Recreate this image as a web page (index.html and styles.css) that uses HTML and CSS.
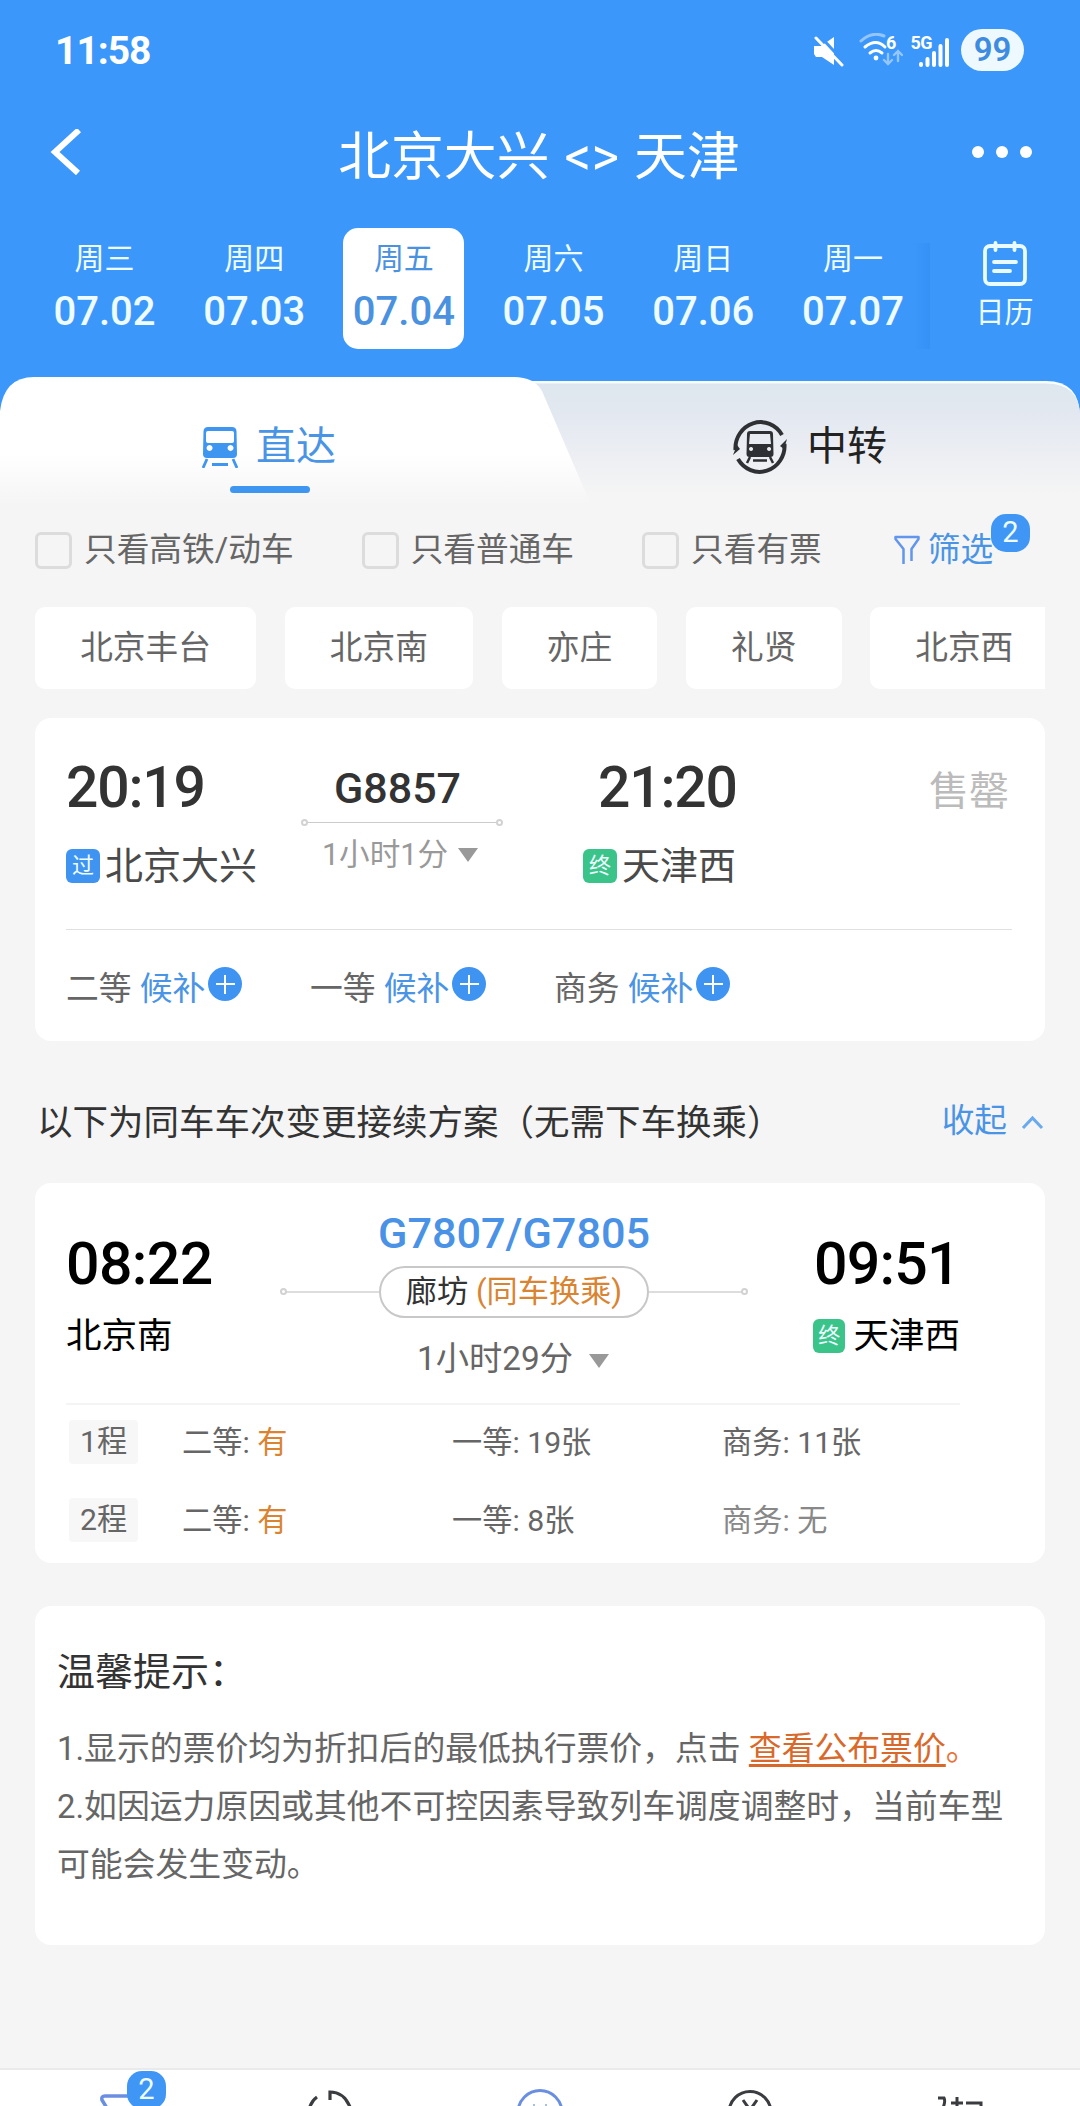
FILE: index.html
```html
<!DOCTYPE html>
<html lang="zh-CN">
<head>
    <meta charset="UTF-8">
    <meta name="viewport" content="width=device-width, initial-scale=1.0">
    <title>北京大兴 - 天津</title>
    <link rel="stylesheet" href="styles.css">
</head>
<body>
    <div class="header">
        <div class="status-bar">
            <span class="clock">11:58</span>
            <div class="status-icons">
                <svg class="icon-mute" width="30" height="31" viewBox="0 0 30 31">
                    <path d="M0 10h7L20 1v28L8 21H2l-2-3z" fill="#fff"/>
                    <path d="M4-2l28 30" stroke="#3c97fb" stroke-width="3"/>
                    <path d="M2 2l26 27" stroke="#fff" stroke-width="3" stroke-linecap="round"/>
                </svg>
                <svg class="icon-wifi" width="44" height="34" viewBox="0 0 44 34">
                    <g fill="none" stroke="#fff" stroke-width="3" stroke-linecap="round">
                        <path d="M2 8Q13-2 25 3" opacity=".45"/>
                        <path d="M6 14q11-9 20 0M11 20q6-5 12 0"/>
                        <path d="M29 21v10m-4-4l4 4 4-4M39 28V18m-4 4l4-4 4 4" opacity=".45" stroke-width="2.4"/>
                    </g>
                    <circle cx="17" cy="25" r="2.4" fill="#fff"/>
                </svg>
                <span class="wifi-gen">6</span>
                <span class="network">5G</span>
                <svg class="icon-signal" width="32" height="34" viewBox="0 0 32 34">
                    <path d="M3 31v-1M9.500 31v-6M16 31V19M22.500 31V12M29 31V6" stroke="#fff" stroke-width="4" stroke-linecap="round"/>
                </svg>
                <span class="battery">99</span>
            </div>
        </div>

        <div class="nav-bar">
            <svg class="back" width="32" height="46" viewBox="0 0 32 46">
                <path d="M29 1L5 23l23 21" fill="none" stroke="#fff" stroke-width="6"/>
            </svg>
            <h1>北京大兴 &lt;&gt; 天津</h1>
            <div class="more"><i></i><i></i><i></i></div>
        </div>

        <div class="date-bar">
            <div class="day"><span>周三</span><b>07.02</b></div>
            <div class="day"><span>周四</span><b>07.03</b></div>
            <div class="day active"><span>周五</span><b>07.04</b></div>
            <div class="day"><span>周六</span><b>07.05</b></div>
            <div class="day"><span>周日</span><b>07.06</b></div>
            <div class="day"><span>周一</span><b>07.07</b></div>
            <div class="calendar">
                <svg width="44" height="45" viewBox="0 0 44 45">
                    <g fill="none" stroke="#e9fbff" stroke-width="3.800" stroke-linecap="round">
                        <rect x="2" y="5" width="40" height="38" rx="5"/>
                        <path d="M12.500 2v7M31.500 2v7M11 21h22M11 30h16"/>
                    </g>
                </svg>
                <span>日历</span>
            </div>
        </div>
    </div>

    <div class="tabs">
        <svg class="tabs-bg" width="1080" height="128" viewBox="0 0 1080 128">
            <defs>
                <linearGradient id="rightTab" x1="0" y1="0" x2="0" y2="1">
                    <stop offset="0" stop-color="#dde6ee"/>
                    <stop offset=".35" stop-color="#e5e9f1"/>
                    <stop offset="1" stop-color="#f5f5f5"/>
                </linearGradient>
                <linearGradient id="leftTab" x1="0" y1="0" x2="0" y2="1">
                    <stop offset="0" stop-color="#fff"/>
                    <stop offset=".6" stop-color="#fff"/>
                    <stop offset="1" stop-color="#f5f5f5"/>
                </linearGradient>
            </defs>
            <path d="M0 0h1080v60H0z" fill="#3c97fb"/>
            <path d="M480 4h566q34 0 34 36v78H480z" fill="#f8fdff"/>
            <path d="M480 6.500h566q34 0 34 34v78H480z" fill="url(#rightTab)"/>
            <path d="M0 34Q4 0 34 0h480q20 0 28 14l49 114H0z" fill="url(#leftTab)"/>
        </svg>
        <div class="tab active">
            <svg class="icon-train" width="36" height="41" viewBox="0 0 36 41">
                <path fill="#3f96f0" fill-rule="evenodd" d="M6 0h24q4 0 4.500 4L35 27q0 4-4 4H5q-4 0-4-4L1.500 4Q2 0 6 0zM6 4q-2 0-2 2v8q0 2 2 2h24q2 0 2-2V6q0-2-2-2zM7.500 18a3 3 0 1 0 .1 0zM28.500 18a3 3 0 1 0 .1 0z"/>
                <path d="M5 32l-4 9M31 32l4 9M10 37.500h16" stroke="#3f96f0" stroke-width="2.800"/>
            </svg>
            <span>直达</span>
        </div>
        <div class="tab">
            <svg class="icon-transfer" width="56" height="58" viewBox="0 0 56 58">
                <g fill="none" stroke="#2e3033" stroke-width="4">
                    <path d="M3.500 32A25 26 0 0 1 50 17M52.500 26A25 26 0 0 1 6 41"/>
                </g>
                <path d="M1 37l7-6-3-4zM55 21l-7 7 4 3z" fill="#2e3033"/>
                <path fill="#2e3033" fill-rule="evenodd" d="M18 13h20q3 0 3 3l.5 20q0 3-3 3h-21q-3 0-3-3L15 16q0-3 3-3zM18 16l-1 10h22l-1-10zM19 29a2 2 0 1 0 .1 0zM37 29a2 2 0 1 0 .1 0z"/>
                <path d="M18 39l-3 6M38 39l3 6M21 42.500h14" stroke="#2e3033" stroke-width="2.500"/>
            </svg>
            <span>中转</span>
        </div>
    </div>

    <div class="filters">
        <label class="check"><i></i>只看高铁/动车</label>
        <label class="check"><i></i>只看普通车</label>
        <label class="check"><i></i>只看有票</label>
        <div class="filter-btn">
            <svg width="26" height="30" viewBox="0 0 26 30">
                <path d="M9.500 29V14L1.500 4V2h23v2l-7 10v12" fill="none" stroke="#6296ec" stroke-width="2.500" stroke-linejoin="round"/>
            </svg>
            <span>筛选</span>
            <em class="count">2</em>
        </div>
    </div>

    <div class="stations">
        <span>北京丰台</span>
        <span>北京南</span>
        <span>亦庄</span>
        <span>礼贤</span>
        <span>北京西</span>
    </div>

    <div class="card train">
        <div class="train-main">
            <div class="stop from">
                <div class="time">20:19</div>
                <div class="name"><i class="mark pass">过</i>北京大兴</div>
            </div>
            <div class="trip">
                <div class="code">G8857</div>
                <div class="rail"></div>
                <div class="duration">1小时1分<i class="arrow"></i></div>
            </div>
            <div class="stop to">
                <div class="time">21:20</div>
                <div class="name"><i class="mark end">终</i>天津西</div>
            </div>
            <div class="sold-out">售罄</div>
        </div>
        <div class="seats">
            <div class="seat">二等 <a>候补</a><i class="plus"></i></div>
            <div class="seat">一等 <a>候补</a><i class="plus"></i></div>
            <div class="seat">商务 <a>候补</a><i class="plus"></i></div>
        </div>
    </div>

    <div class="section-title">
        <h2>以下为同车车次变更接续方案（无需下车换乘）</h2>
        <div class="collapse">
            收起
            <svg width="23" height="15" viewBox="0 0 23 15">
                <path d="M2 13l9.500-10L21 13" fill="none" stroke="#69a9ee" stroke-width="3"/>
            </svg>
        </div>
    </div>

    <div class="card plan">
        <div class="plan-main">
            <div class="plan-stop">
                <div class="time">08:22</div>
                <div class="name">北京南</div>
            </div>
            <div class="plan-trip">
                <div class="code">G7807/G7805</div>
                <div class="transfer">
                    <span class="line left"></span>
                    <div class="pill">廊坊 <em>(同车换乘)</em></div>
                    <span class="line right"></span>
                </div>
                <div class="duration">1小时29分<i class="arrow"></i></div>
            </div>
            <div class="plan-stop to">
                <div class="time">09:51</div>
                <div class="name"><i class="mark end">终</i>天津西</div>
            </div>
        </div>
        <div class="leg">
            <span class="leg-no">1程</span>
            <span>二等: <em>有</em></span>
            <span>一等: 19张</span>
            <span>商务: 11张</span>
        </div>
        <div class="leg">
            <span class="leg-no">2程</span>
            <span>二等: <em>有</em></span>
            <span>一等: 8张</span>
            <span class="none">商务: 无</span>
        </div>
    </div>

    <div class="card tips">
        <h3>温馨提示：</h3>
        <p>1.显示的票价均为折扣后的最低执行票价，点击 <a>查看公布票价</a><em>。</em></p>
        <p>2.如因运力原因或其他不可控因素导致列车调度调整时，当前车型可能会发生变动。</p>
    </div>

    <div class="bottom-bar">
        <div class="bottom-item">
            <svg width="60" height="60" viewBox="0 0 60 60">
                <path d="M28 54V34L17 16q-1-4 3-4h32q4 0 2 4L43 34v14" fill="none" stroke="#6b8fe0" stroke-width="3.500" stroke-linejoin="round"/>
            </svg>
            <em class="count">2</em>
        </div>
        <div class="bottom-item">
            <svg width="60" height="60" viewBox="0 0 60 60">
                <path d="M11 26Q13 17 19 13M32 16V8Q46 8 52 23" fill="none" stroke="#3a3c40" stroke-width="3.200"/>
            </svg>
        </div>
        <div class="bottom-item">
            <svg width="60" height="60" viewBox="0 0 60 60">
                <circle cx="30" cy="28.500" r="22" fill="none" stroke="#6b8fe0" stroke-width="3"/>
                <path d="M24 20v4M36 20v4" stroke="#a9bdea" stroke-width="2"/>
            </svg>
        </div>
        <div class="bottom-item">
            <svg width="60" height="60" viewBox="0 0 60 60">
                <circle cx="28" cy="28.500" r="21" fill="none" stroke="#3a3c40" stroke-width="3"/>
                <path d="M21 16l7 10 7-10M28 26v14M20 28h16" fill="none" stroke="#3a3c40" stroke-width="3"/>
            </svg>
        </div>
        <div class="bottom-item">
            <svg width="60" height="60" viewBox="0 0 60 60">
                <path d="M3 14h6q2 4-2 12M22 13v20M16 19h12M31 19h15v14" fill="none" stroke="#3a3c40" stroke-width="3"/>
            </svg>
        </div>
    </div>
</body>
</html>
```
FILE: styles.css
```css
* {
    margin: 0;
    padding: 0;
    box-sizing: border-box;
}

body {
    width: 1080px;
    background: #f5f5f5;
    font-family: Roboto, "Noto Sans CJK SC", sans-serif;
    font-size: 32.7px;
    color: #666;
}

i, em {
    font-style: normal;
}

h1, h2, h3 {
    font-weight: 400;
}

svg {
    display: block;
    flex: none;
}

/* header */
.header {
    height: 377px;
    background: #3c97fb;
    color: #fff;
}

.status-bar {
    height: 100px;
    padding: 0 56px 0 55px;
    display: flex;
    align-items: center;
    justify-content: space-between;
}

.clock {
    font-size: 39px;
    font-weight: 700;
    letter-spacing: -1px;
    padding-top: 1px;
}

.status-icons {
    display: flex;
    align-items: center;
}

.icon-mute {
    margin-top: 3px;
}

.icon-wifi {
    margin-left: 15px;
}

.wifi-gen,
.network {
    font-size: 18px;
    font-weight: 700;
    line-height: 22px;
    margin-top: -15px;
}

.wifi-gen {
    margin-left: -17px;
}

.network {
    margin-left: 14px;
    letter-spacing: -0.500px;
}

.icon-signal {
    margin-left: -14px;
    margin-top: 2px;
}

.battery {
    width: 63px;
    height: 42px;
    margin-left: 11px;
    border-radius: 21px;
    background: #eef9ff;
    color: #3f8be0;
    font-size: 33px;
    font-weight: 600;
    line-height: 42px;
    text-align: center;
}

.nav-bar {
    height: 108px;
    padding: 0 48px 0 50px;
    display: flex;
    align-items: center;
    justify-content: space-between;
}

.back,
.more {
    margin-top: -5px;
}

.nav-bar h1 {
    font-size: 52.800px;
    line-height: 60px;
    padding: 5px 0 0 24px;
    word-spacing: 2px;
}

.more {
    display: flex;
    gap: 12px;
}

.more i {
    width: 12px;
    height: 12px;
    border-radius: 50%;
    background: #fff;
}

.date-bar {
    height: 141px;
    padding: 20px 0 0 30px;
    display: flex;
    color: #eefcff;
}

.day {
    width: 121px;
    height: 121px;
    margin-right: 28.700px;
    flex: none;
    padding-top: 11px;
    border-radius: 15px;
    display: flex;
    flex-direction: column;
    align-items: center;
}

.day:first-child {
    margin-left: 14px;
}

.day span {
    font-size: 30px;
    line-height: 40px;
}

.day b {
    margin-top: 9px;
    font-size: 40px;
    font-weight: 500;
    line-height: 48px;
}

.day.active {
    background: #fff;
    color: #4a92e0;
}

.calendar {
    flex: 1;
    margin-left: -28px;
    padding: 13px 0 0 15px;
    display: flex;
    flex-direction: column;
    align-items: center;
    background: linear-gradient(to right, rgba(30, 120, 225, 0), rgba(30, 120, 225, 0.2)) left 15px / 16px 112px no-repeat;
    font-size: 29px;
    line-height: 40px;
}

.calendar span {
    margin-top: 7px;
}

/* tabs */
.tabs {
    position: relative;
    height: 128px;
    display: flex;
}

.tabs-bg {
    position: absolute;
    top: 0;
    left: 0;
}

.tab {
    position: relative;
    width: 540px;
    display: flex;
    color: #222;
    font-size: 40px;
    line-height: 60px;
    padding-top: 39px;
}

.tab.active {
    color: #4a94e6;
    padding-left: 202px;
}

.tab:last-child {
    padding-left: 192px;
}

.tab span {
    padding-top: 1px;
}

.tab.active span {
    margin-left: 18px;
}

.tab.active::after {
    content: "";
    position: absolute;
    left: 230px;
    top: 109px;
    width: 80px;
    height: 7px;
    border-radius: 4px;
    background: #3f96f0;
}

.tab:last-child span {
    margin-left: 19px;
}

.icon-train {
    margin-top: 11px;
}

.icon-transfer {
    margin-top: 2px;
}

/* filters */
.filters {
    height: 102px;
    padding-left: 35px;
    display: flex;
    align-items: center;
}

.check {
    display: flex;
    align-items: center;
    line-height: 40px;
    margin-right: 68px;
    white-space: nowrap;
    margin-top: -12px;
}

.check i {
    width: 37px;
    height: 37px;
    margin-right: 12px;
    border: 3px solid #dcdcdc;
    border-radius: 6px;
}

.filter-btn {
    position: relative;
    margin-left: 4px;
    margin-top: -12px;
    display: flex;
    align-items: center;
    color: #4a94e6;
    line-height: 40px;
}

.filter-btn span {
    margin-left: 8px;
}

.count {
    position: absolute;
    width: 39px;
    height: 38px;
    border-radius: 15px;
    background: #3f96f5;
    color: #eefcff;
    font-size: 29px;
    line-height: 36px;
    text-align: center;
}

.filter-btn .count {
    top: -16px;
    left: 97px;
}

/* stations */
.stations {
    width: 1010px;
    margin-left: 35px;
    display: flex;
    gap: 28.500px;
    overflow: hidden;
}

.stations span {
    flex: none;
    height: 82px;
    padding: 0 45.200px;
    border-radius: 10px;
    background: #fff;
    font-size: 32.700px;
    line-height: 82px;
}

/* cards */
.card {
    margin: 28px 35px 0;
    background: #fff;
    border-radius: 16px;
}

.train {
    height: 323px;
    margin-top: 29px;
    padding: 0 33px 0 31px;
}

.train-main {
    height: 212px;
    display: flex;
    border-bottom: 1px solid #e0e0e0;
}

.time {
    font-weight: 500;
}

.stop .time {
    color: #333;
    font-size: 57px;
    line-height: 60px;
    letter-spacing: -1.200px;
    margin-top: 40px;
}

.stop .name {
    margin-top: 26px;
    color: #4a4a4a;
    font-size: 38px;
    line-height: 44px;
    display: flex;
    align-items: center;
}

.mark {
    width: 34px;
    height: 34px;
    margin-right: 5px;
    border-radius: 6px;
    color: #eefcff;
    font-size: 22px;
    line-height: 33px;
    text-align: center;
}

.mark.pass {
    background: #3f94f2;
}

.mark.end {
    background: #3bc48a;
}

.from {
    width: 234px;
    white-space: nowrap;
}

.to .time {
    padding-left: 15px;
}

.trip {
    width: 204px;
    text-align: center;
}

.trip .code {
    margin-top: 44px;
    color: #333;
    font-size: 43px;
    font-weight: 500;
    line-height: 52px;
    padding-right: 9px;
}

/* thin line with a ring on both ends */
.rail {
    position: relative;
    height: 1px;
    margin: 8px 5px 0;
    background: #ccc;
}

.rail::before,
.rail::after,
.line::before {
    content: "";
    position: absolute;
    top: -3px;
    width: 7px;
    height: 7px;
    box-sizing: border-box;
    border: 2px solid #d2d2d2;
    border-radius: 50%;
    background: #fff;
}

.rail::before {
    left: -4px;
}

.rail::after {
    right: -4px;
}

.duration {
    display: flex;
    align-items: center;
    justify-content: center;
}

.trip .duration {
    margin: 12px 4px 0 0;
    color: #999;
    font-size: 30.600px;
    line-height: 40px;
}

.arrow {
    margin-left: 10px;
    border: 10.500px solid transparent;
    border-top: 14px solid #999;
    border-bottom: 0;
}

.stop.to {
    margin-left: 79px;
    width: 300px;
}

.sold-out {
    margin: 44px 3px 0 auto;
    color: #bbb;
    font-size: 40px;
    line-height: 60px;
}

.seats {
    display: flex;
    height: 110px;
    padding-top: 1px;
}

.seat {
    width: 244px;
    display: flex;
    align-items: center;
    white-space: pre;
    font-size: 32.800px;
}

.seat a,
.collapse {
    color: #4a94e6;
}

.plus {
    width: 34px;
    height: 34px;
    margin: -3px 0 0 3px;
    border-radius: 50%;
    background:
        linear-gradient(#fff, #fff) center / 19px 2px no-repeat,
        linear-gradient(#fff, #fff) center / 2px 19px no-repeat,
        #3f94f2;
}

/* connecting plans */
.section-title {
    height: 142px;
    padding: 0 36px 0 37px;
    display: flex;
    justify-content: space-between;
    color: #333;
}

.section-title h2 {
    font-size: 35.500px;
    line-height: 44px;
    margin-top: 60px;
    white-space: nowrap;
}

.collapse {
    display: flex;
    align-items: center;
    gap: 14px;
    height: 40px;
    margin-top: 56px;
}

.collapse svg {
    margin-top: 10px;
}

.plan {
    height: 380px;
    margin-top: 0;
    padding: 0 31px;
}

.plan-main {
    width: 894px;
    height: 222px;
    display: flex;
    border-bottom: 2px solid #f4f4f4;
    color: #000;
}

.plan-stop {
    width: 213px;
}

.plan-stop .time {
    margin-top: 51px;
    font-size: 59px;
    line-height: 60px;
    letter-spacing: -0.600px;
}

.plan-stop .name {
    margin-top: 20px;
    display: flex;
    align-items: center;
    font-size: 35.500px;
    line-height: 44px;
}

.plan-stop.to {
    width: 147px;
    margin-left: 64px;
    white-space: nowrap;
}

.plan-stop.to .time {
    padding-left: 1px;
    letter-spacing: -0.800px;
}

.plan-stop .mark {
    margin-right: 8px;
}

.plan-trip {
    width: 470px;
    display: flex;
    flex-direction: column;
    align-items: center;
}

.plan-trip .code {
    margin-top: 26px;
    color: #4a92e6;
    font-size: 43.200px;
    font-weight: 500;
    line-height: 50px;
}

.transfer {
    display: flex;
    align-items: center;
    margin-top: 7px;
}

.line {
    position: relative;
    width: 93px;
    height: 2px;
    background: #ddd;
}

.line.left::before {
    left: -6px;
}

.line.right::before {
    right: -6px;
}

.pill {
    width: 270px;
    height: 52px;
    border: 2px solid #c8c8c8;
    border-radius: 26px;
    color: #333;
    font-size: 31.200px;
    line-height: 48px;
    text-align: center;
    white-space: nowrap;
}

.pill em,
.leg em {
    color: #d98432;
}

.plan-trip .duration {
    margin-top: 19px;
    margin-right: 2px;
    color: #666;
    font-size: 33.300px;
    line-height: 44px;
}

.plan-trip .arrow {
    margin: 4px 0 0 16px;
}

.leg {
    display: flex;
    align-items: flex-start;
    height: 78px;
    padding-top: 15px;
    font-size: 30.200px;
}

.leg span {
    width: 270px;
    line-height: 46px;
}

.leg .leg-no {
    width: 69px;
    height: 44px;
    margin: 0 44px 0 3px;
    background: #f7f7f7;
    border-radius: 4px;
    line-height: 44px;
    text-align: center;
}

.leg .none {
    color: #888;
}

.tips {
    height: 339px;
    margin-top: 43px;
    padding: 44px 20px 0 22px;
    font-size: 32.850px;
    line-height: 58px;
}

.tips h3 {
    color: #333;
    font-size: 38px;
    line-height: 44px;
    margin-bottom: 26px;
}

.tips a {
    color: #d9692a;
    text-decoration: underline;
    text-decoration-thickness: 3px;
    text-underline-offset: 4px;
}

.tips em {
    color: #e8743c;
}

/* bottom bar, only its upper part is on screen */
.bottom-bar {
    height: 38px;
    margin-top: 123px;
    padding: 14px 9px 0;
    display: flex;
    overflow: hidden;
    background: #fff;
    border-top: 2px solid #eaeaea;
}

.bottom-item {
    position: relative;
    flex: 1;
    display: flex;
    justify-content: center;
}

.bottom-item .count {
    top: -13px;
    left: 118px;
}
```
